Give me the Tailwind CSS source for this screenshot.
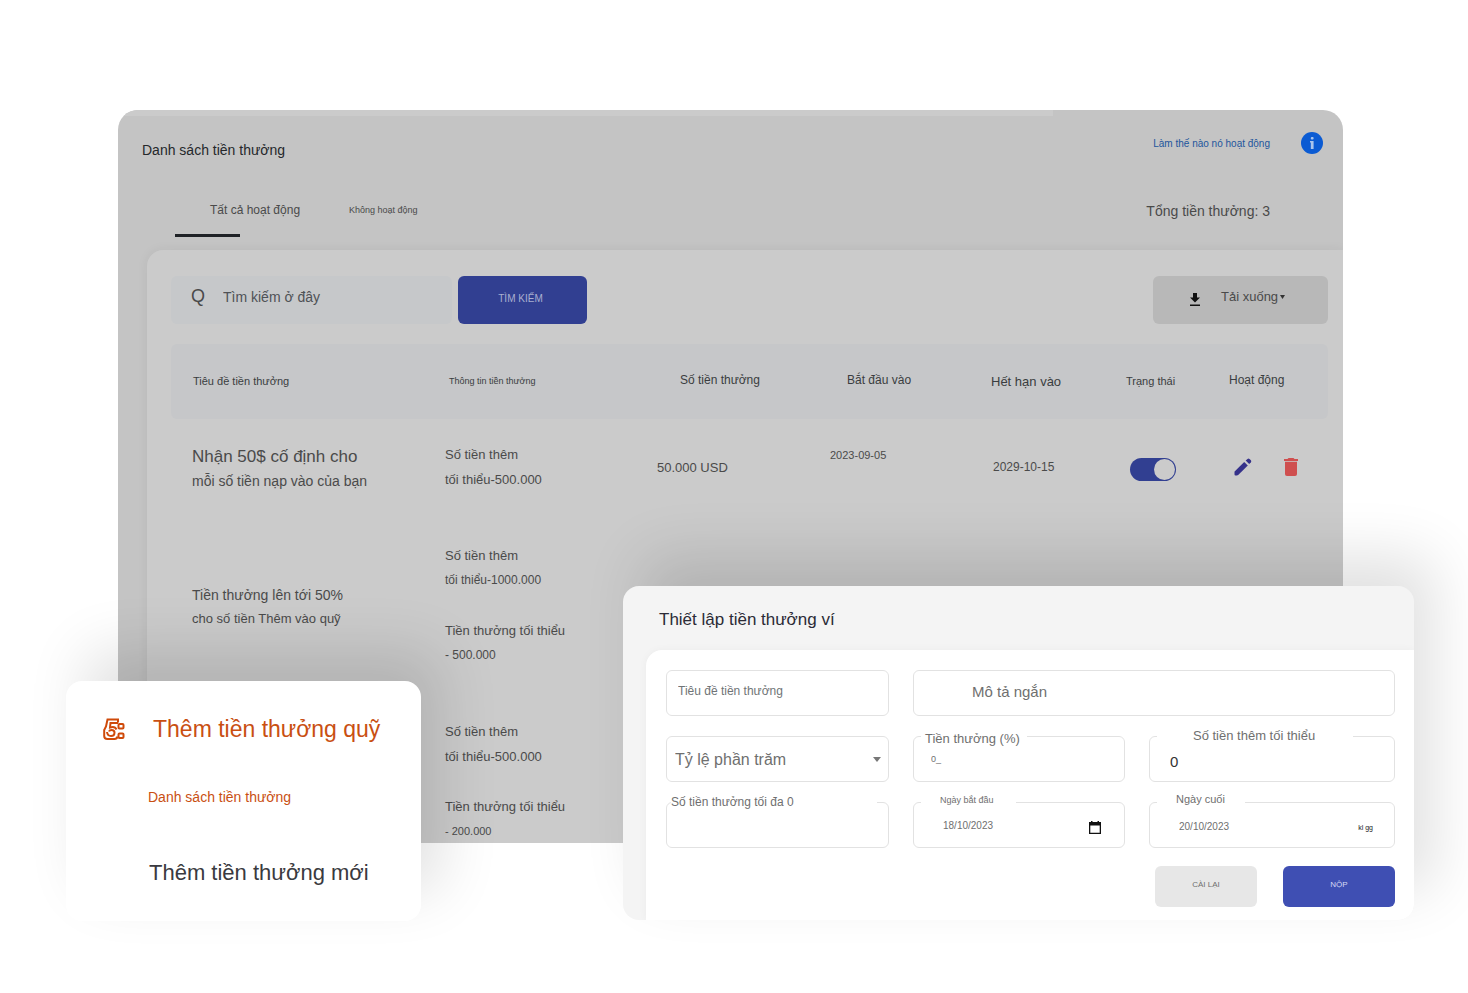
<!DOCTYPE html>
<html lang="vi">
    <head>
        <meta charset="UTF-8" />
        <meta name="viewport" content="width=device-width, initial-scale=1.0" />
        <title>Danh sách tiền thưởng</title>
        <script src="https://cdn.jsdelivr.net/npm/@tailwindcss/browser@4"></script>
    </head>
    <body class="bg-white font-['Liberation_Sans',Arial,sans-serif] min-h-screen overflow-x-hidden">
        <div class="relative pt-[110px] pl-[118px] pr-[125px]">
            <!-- Bonus list -->
            <main class="bg-[#c4c4c4] rounded-t-[20px] overflow-hidden text-[#4a4a4a]">
                <div class="h-[6px] w-[935px] bg-[#cbcbcb]"></div>
                <header class="flex justify-between items-center h-[54px] pl-6 pr-5">
                    <h1 class="text-[14px] leading-5 text-[#25282b] pt-3.5">Danh sách tiền thưởng</h1>
                    <div class="flex items-center gap-[31px]">
                        <a href="#" class="text-[10px] text-[#1d559c]">Làm thế nào nó hoạt động</a>
                        <button type="button" aria-label="Thông tin">
                            <svg class="size-[22px] block" viewBox="0 0 22 22">
                                <circle cx="11" cy="11" r="11" fill="#0b5bd3" />
                                <rect x="9.8" y="5" width="2.8" height="2.6" rx="1" fill="#a9c4ec" />
                                <path d="M9 9h3.600v8H9.800v-6.500H9z" fill="#a9c4ec" />
                            </svg>
                        </button>
                    </div>
                </header>

                <div class="flex justify-between items-start h-[80px] pl-[57px] pr-[73px] pt-[30px]">
                    <nav class="flex items-start">
                        <a href="#" class="block w-[174px]">
                            <span class="block text-[12px] leading-5 pl-[35px]">Tất cả hoạt động</span>
                            <span class="block w-[65px] h-[3px] mt-[14px] bg-[#1f2226]"></span>
                        </a>
                        <a href="#" class="text-[9px] leading-5">Không hoạt động</a>
                    </nav>
                    <p class="text-[14px] leading-[22px]">Tổng tiền thưởng: 3</p>
                </div>

                <section class="ml-[29px] bg-[#cbcbcb] rounded-tl-[16px] shadow-[0_0_12px_rgba(0,0,0,0.06)] pt-[26px] pl-6 pr-[15px]">
                    <div class="flex items-center">
                        <label class="flex items-center w-[281px] h-12 rounded-md bg-[#c6c8ca] pl-5">
                            <span class="w-8 text-[18px] leading-6 pb-2">Q</span>
                            <input type="text" placeholder="Tìm kiếm ở đây" class="w-[180px] bg-transparent text-[14px] pb-1.5 outline-none placeholder:text-[#4f5256]" />
                        </label>
                        <button type="button" class="ml-[6px] w-[129px] h-12 rounded-md bg-[#313f91] text-[10px] text-[#a9afd0] pb-1 pr-1">TÌM KIẾM</button>
                        <button type="button" class="ml-auto w-[175px] h-12 rounded-md bg-[#b8b8b8] flex items-center pl-[36px]">
                            <svg class="w-3 h-3.5 mb-0.5" viewBox="0 0 12 14" fill="#111">
                                <path d="M4 1h4v4.500h3L6 10.500 1 5.500h3z" />
                                <path d="M1 12.500h10V14H1z" />
                            </svg>
                            <span class="text-[13px] pl-5 pb-1.5">Tải xuống</span>
                            <svg class="w-[5px] h-1 ml-0.5 mb-1.5" viewBox="0 0 5 4" fill="#333"><path d="M0 0h5L2.500 4z" /></svg>
                        </button>
                    </div>

                    <table class="w-full table-fixed mt-5 -mb-px text-left text-[13px] leading-[25px]">
                        <thead class="bg-[#c6c7c9] text-[#3a3d40]">
                            <tr class="h-[75px]">
                                <th class="w-[274px] font-normal text-[11px] pl-[22px] rounded-l-md">Tiêu đề tiền thưởng</th>
                                <th class="w-[212px] font-normal text-[9px] pl-1">Thông tin tiền thưởng</th>
                                <th class="w-[173px] font-normal text-[12px] pl-[23px] pb-0.5">Số tiền thưởng</th>
                                <th class="w-[151px] font-normal text-[12px] pl-[17px] pb-0.5">Bắt đầu vào</th>
                                <th class="w-[145px] font-normal text-[13px] pl-[10px]">Hết hạn vào</th>
                                <th class="w-[103px] font-normal text-[11px]">Trạng thái</th>
                                <th class="font-normal text-[12px] pb-0.5 rounded-r-md">Hoạt động</th>
                            </tr>
                        </thead>
                        <tbody>
                            <tr>
                                <td class="pt-[25px] pb-[26px] pl-[21px] text-[14px] leading-[25px]">
                                    <span class="block text-[17px] leading-[25px]">Nhận 50$ cố định cho</span>
                                    mỗi số tiền nạp vào của bạn
                                </td>
                                <td class="pt-[23px] pb-7">
                                    <p>Số tiền thêm</p>
                                    <p>tối thiểu-500.000</p>
                                </td>
                                <td class="pt-[23px] pb-7">50.000 USD</td>
                                <td class="pt-6 pb-[27px] align-top text-[11px] leading-[25px]">2023-09-05</td>
                                <td class="pt-[23px] pb-7 pl-3 text-[12px]">2029-10-15</td>
                                <td class="pt-[25px] pb-[26px] pl-1">
                                    <label class="relative block w-[46px] h-[23px]">
                                        <input type="checkbox" checked aria-label="Trạng thái" class="appearance-none block w-[46px] h-[23px] rounded-full bg-[#8a8a8a] checked:bg-[#313f91]" />
                                        <span class="absolute top-px right-px size-[21px] rounded-full bg-[#cbcbcb]"></span>
                                    </label>
                                </td>
                                <td class="pt-[23px] pb-7 pl-[5px]">
                                    <div class="flex items-center gap-8">
                                        <button type="button" aria-label="Sửa">
                                            <svg class="size-[18px] block" viewBox="0 0 18 18" fill="#35318a">
                                                <path d="M.6 13.500 10.200 4l3.600 3.600-9.600 9.500q-.6.4-1.300.4H1.500q-1 0-1-1v-1.700q0-.7.1-1.300z" />
                                                <path d="M11.700 2.600 13.500.9q1-.8 2 0l1.400 1.400q.8 1 0 2l-1.700 1.800z" />
                                            </svg>
                                        </button>
                                        <button type="button" aria-label="Xóa">
                                            <svg class="w-3.5 h-[18px] block" viewBox="0 0 14 18" fill="#cf4f4f">
                                                <path d="M0 1h3.500l1-1h5l1 1H14v2H0z" />
                                                <path d="M1 3.700h12V16q0 2-2 2H3q-2 0-2-2z" />
                                            </svg>
                                        </button>
                                    </div>
                                </td>
                            </tr>
                            <tr>
                                <td class="pt-6 pb-[27px] pl-[21px]">
                                    <p class="text-[14px] leading-6">Tiền thưởng lên tới 50%</p>
                                    <p class="leading-6">cho số tiền Thêm vào quỹ</p>
                                </td>
                                <td class="pt-[23px] pb-7">
                                    <p>Số tiền thêm</p>
                                    <p class="text-[12px]">tối thiểu-1000.000</p>
                                    <p class="mt-[25px]">Tiền thưởng tối thiểu</p>
                                    <p class="text-[12px]">- 500.000</p>
                                </td>
                                <td colspan="5"></td>
                            </tr>
                            <tr>
                                <td></td>
                                <td class="pt-[23px]">
                                    <p>Số tiền thêm</p>
                                    <p>tối thiểu-500.000</p>
                                    <p class="mt-[25px]">Tiền thưởng tối thiểu</p>
                                    <p class="text-[11px]">- 200.000</p>
                                </td>
                                <td colspan="5"></td>
                            </tr>
                        </tbody>
                    </table>
                </section>
            </main>

            <!-- Floating menu -->
            <nav class="absolute left-[66px] top-[681px] w-[355px] bg-white rounded-2xl shadow-[20px_-30px_60px_rgba(0,0,0,0.12)] pt-8 pb-8">
                <a href="#" class="flex items-center pl-[37px] text-[#c94f12]">
                    <svg class="size-[22px]" viewBox="0 0 22 22" fill="none" stroke="#cf4a0a" stroke-width="2">
                        <path d="M15 4.500V1.500H4.500L3 8.500 1.200 12v6q0 3 3.300 3h7q2.500 0 3-2.500" />
                        <path d="M15 5H7.500L7 9.500q5-1.500 6.500 2" />
                        <path d="M4 14q.5 4 4 4t3.500-3.500Q11.500 12 8.500 12q-2 0-2.500 1.500" />
                        <rect x="15.500" y="6" width="5" height="4.500" rx="1" />
                        <rect x="15.500" y="15.500" width="5" height="4.500" rx="1" />
                    </svg>
                    <span class="pl-7 text-[23px] leading-8">Thêm tiền thưởng quỹ</span>
                </a>
                <a href="#" class="block pl-[82px] mt-10 text-[14px] leading-6 text-[#c94f12]">Danh sách tiền thưởng</a>
                <a href="#" class="block pl-[83px] mt-12 text-[22px] leading-8 text-[#3a3a40]">Thêm tiền thưởng mới</a>
            </nav>

            <!-- Wallet bonus setup -->
            <section class="absolute left-[623px] right-[54px] top-[586px] bg-[#f4f4f4] rounded-2xl overflow-hidden shadow-[20px_-30px_60px_rgba(0,0,0,0.12)]">
                <h2 class="pl-9 pt-5 pb-4 text-[17px] leading-7 text-[#2b2b36]">Thiết lập tiền thưởng ví</h2>
                <form class="ml-[23px] bg-white rounded-tl-2xl pt-5 pl-5 pr-[19px] pb-[13px] text-[#6f6f6f] shadow-[0_0_8px_rgba(0,0,0,0.04)]">
                    <div class="grid grid-cols-[223fr_212fr_246fr] gap-x-6 gap-y-5">
                        <input type="text" aria-label="Tiêu đề tiền thưởng" placeholder="Tiêu đề tiền thưởng" class="w-full h-[46px] border border-[#e2e2e2] rounded-md pl-[11px] pb-1 text-[12px] placeholder:text-[#6f7476]" />
                        <input type="text" aria-label="Mô tả ngắn" placeholder="Mô tả ngắn" class="col-span-2 w-full h-[46px] border border-[#e2e2e2] rounded-md pl-[58px] pb-1 text-[15px] placeholder:text-[#6f6f6f]" />

                        <div class="relative">
                            <select aria-label="Loại" class="appearance-none w-full h-[46px] border border-[#e2e2e2] rounded-md pl-2 pt-0.5 text-[16px]">
                                <option>Tỷ lệ phần trăm</option>
                            </select>
                            <svg class="absolute right-2 top-[21px] w-2 h-[5px]" viewBox="0 0 8 5" fill="#777"><path d="M0 0h8L4 5z" /></svg>
                        </div>
                        <div class="relative">
                            <label for="percent" class="absolute left-2 -top-[7px] w-[106px] bg-white pl-1 text-[13px] leading-5">Tiền thưởng (%)</label>
                            <input id="percent" type="text" value="0_" class="w-full h-[46px] border border-[#e2e2e2] rounded-md pl-[17px] text-[9px]" />
                        </div>
                        <div class="relative">
                            <label for="min" class="absolute left-2 -top-2.5 w-[196px] bg-white pl-9 text-[13px] leading-5">Số tiền thêm tối thiểu</label>
                            <input id="min" type="text" value="0" class="w-full h-[46px] border border-[#e2e2e2] rounded-md pl-5 pt-1 text-[15px] text-[#333]" />
                        </div>

                        <div class="relative">
                            <label for="max" class="absolute left-[5px] -top-2.5 w-[206px] bg-white text-[12px] leading-5">Số tiền thưởng tối đa 0</label>
                            <input id="max" type="text" class="w-full h-[46px] border border-[#e2e2e2] rounded-md pl-5" />
                        </div>
                        <div class="relative">
                            <label for="start" class="absolute left-2 -top-3 w-[95px] bg-white pl-[19px] text-[9px] leading-5">Ngày bắt đầu</label>
                            <input id="start" type="text" value="18/10/2023" class="w-full h-[46px] border border-[#e2e2e2] rounded-md pl-[29px] text-[10px]" />
                            <svg class="absolute right-6 top-[19px] w-3 h-[13px]" viewBox="0 0 12 13" fill="#111">
                                <path d="M2 0h1.500v1h5V0H10v1h2v12H0V1h2zM1.300 4.500v7.200h9.400V4.500z" fill-rule="evenodd" />
                            </svg>
                        </div>
                        <div class="relative">
                            <label for="end" class="absolute left-2 -top-[13px] w-[88px] bg-white pl-[19px] text-[11px] leading-5">Ngày cuối</label>
                            <input id="end" type="text" value="20/10/2023" class="w-full h-[46px] border border-[#e2e2e2] rounded-md pl-[29px] pt-0.5 text-[10px]" />
                            <span class="absolute right-[22px] top-5 text-[7px] leading-3 text-[#222]">kl gg</span>
                        </div>
                    </div>
                    <div class="flex justify-end gap-[26px] mt-[18px]">
                        <button type="reset" class="w-[102px] h-[41px] rounded-md bg-[#e7e7e7] text-[8px] pb-1">CÀI LẠI</button>
                        <button type="submit" class="w-[112px] h-[41px] rounded-md bg-[#3f4fb3] text-[8px] text-[#d5d9f3] pb-1">NỘP</button>
                    </div>
                </form>
            </section>
        </div>
    </body>
</html>
